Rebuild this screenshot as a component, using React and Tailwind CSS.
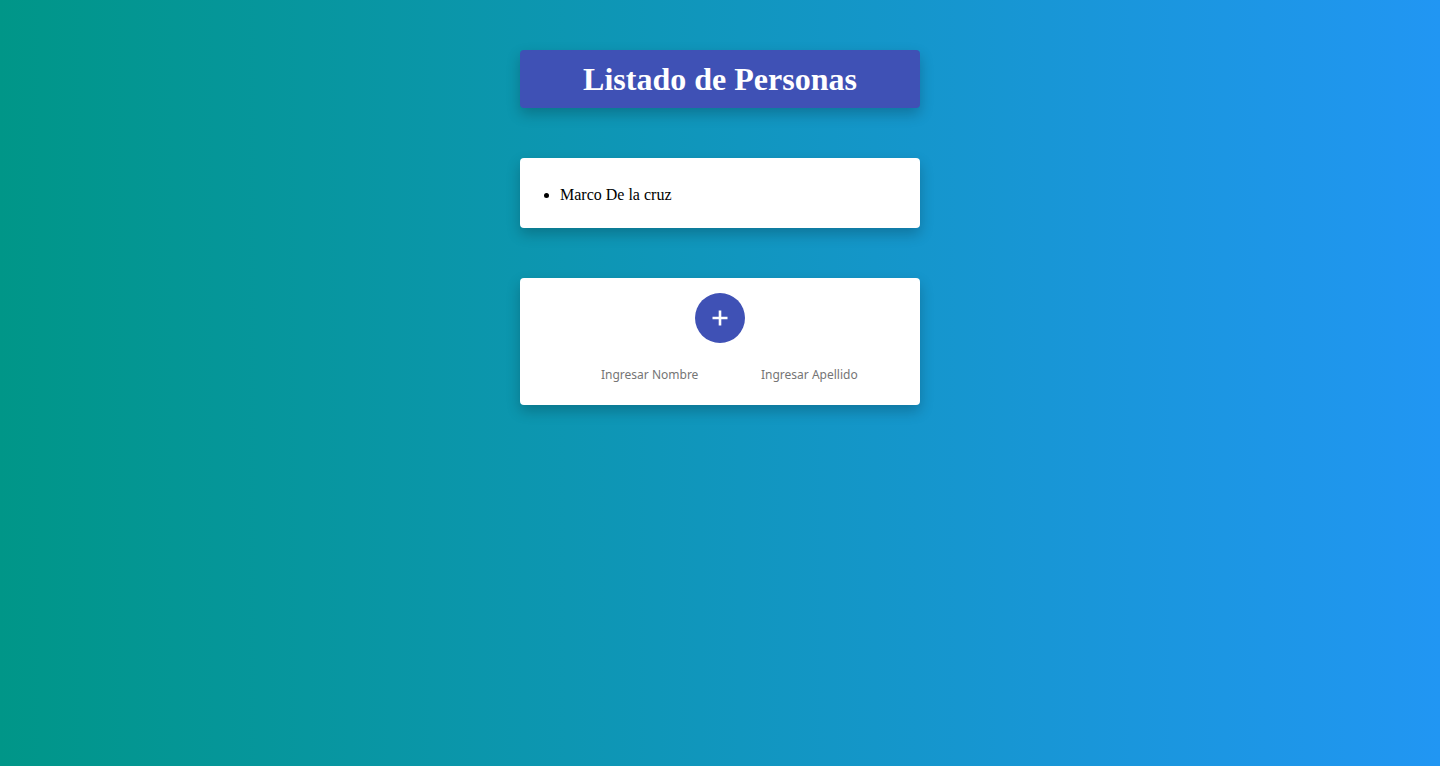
export default function App() {
  return (
    <div className="min-h-[766px] w-full bg-linear-to-r/srgb from-[#009688] to-[#2196f3] flex flex-col items-center pt-[50px]">
      <div className="w-[400px] h-[58px] bg-[#3f51b5] rounded-[4px] flex items-center justify-center shadow-[0_6px_14px_rgba(0,0,0,0.22)]">
        <h1 className="text-white font-bold text-[32px] leading-none" style={{ fontFamily: '"Liberation Serif", serif' }}>
          Listado de Personas
        </h1>
      </div>
      <div className="mt-[50px] w-[400px] h-[70px] bg-white rounded-[4px] shadow-[0_6px_14px_rgba(0,0,0,0.22)] flex items-center pt-[3px]">
        <ul className="list-disc pl-10 text-[16px] text-black" style={{ fontFamily: '"Liberation Serif", serif' }}>
          <li>Marco De la cruz</li>
        </ul>
      </div>
      <div className="mt-[50px] w-[400px] h-[127px] bg-white rounded-[4px] shadow-[0_6px_14px_rgba(0,0,0,0.22)] flex flex-col items-center pt-[15px]">
        <button className="w-[50px] h-[50px] rounded-full bg-[#3f51b5] flex items-center justify-center">
          <svg width="20" height="20" viewBox="0 0 20 20">
            <path d="M10 2.5v15M2.5 10h15" stroke="white" strokeWidth="2.6" />
          </svg>
        </button>
        <div className="mt-[23px] w-full flex pl-[81px]" style={{ fontFamily: '"Noto Sans", sans-serif' }}>
          <input className="w-[160px] text-[12px] outline-none placeholder:text-[#757575] bg-transparent" placeholder="Ingresar Nombre" />
          <input className="w-[160px] text-[12px] outline-none placeholder:text-[#757575] bg-transparent" placeholder="Ingresar Apellido" />
        </div>
      </div>
    </div>
  );
}
